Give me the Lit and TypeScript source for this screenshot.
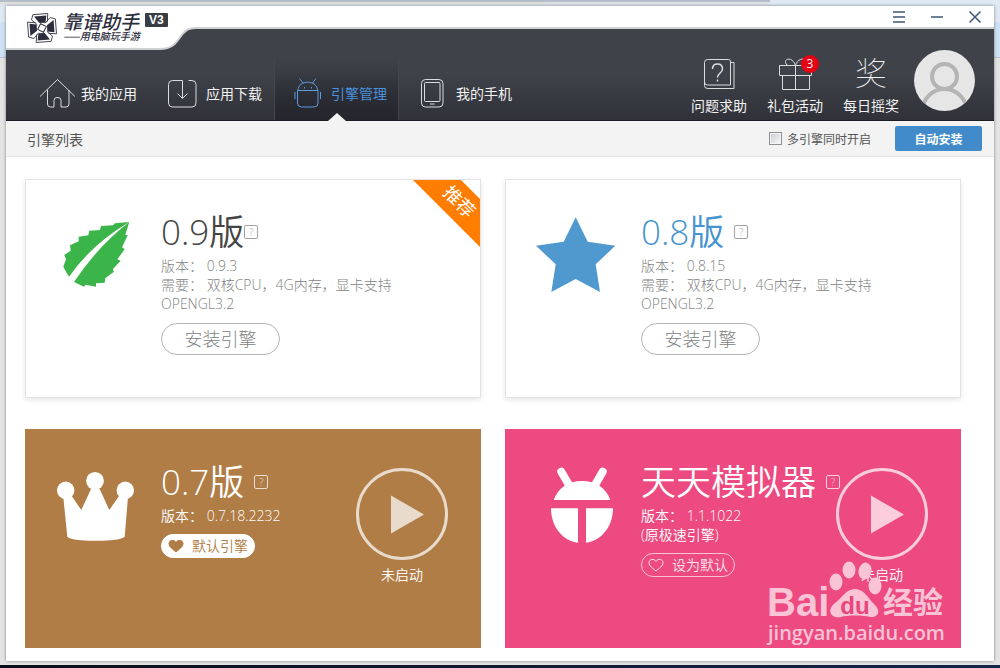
import { LitElement, html, css, svg, nothing } from "lit";
import { customElement, property } from "lit/decorators.js";
import { classMap } from "lit/directives/class-map.js";

type Engine = {
  theme: string;
  icon: string;
  title: string;
  lines: string[];
  installed: boolean;
  isDefault?: boolean;
  recommended?: boolean;
  tight?: boolean;
};

const engines: Engine[] = [
  {
    theme: "dark",
    icon: "leaf",
    title: "0.9版",
    lines: ["版本： 0.9.3", "需要： 双核CPU，4G内存，显卡支持 OPENGL3.2"],
    installed: false,
    recommended: true,
    tight: true,
  },
  {
    theme: "blue",
    icon: "star",
    title: "0.8版",
    lines: ["版本： 0.8.15", "需要： 双核CPU，4G内存，显卡支持 OPENGL3.2"],
    installed: false,
  },
  {
    theme: "brown",
    icon: "crown",
    title: "0.7版",
    lines: ["版本： 0.7.18.2232"],
    installed: true,
    isDefault: true,
  },
  {
    theme: "pink",
    icon: "robot",
    title: "天天模拟器",
    lines: ["版本： 1.1.1022", "(原极速引擎)"],
    installed: true,
  },
];

const emblems: Record<string, unknown> = {
  leaf: svg`<g fill="#3bb54a">
    <path d="M73.3 8 59 9.3 57 11.3 45 12 44 16 33.3 16.7 32.3 21.3 22.7 22.7 22.7 27.3 14 31.3 14.7 36.7 8.3 41 10 45.3 7.3 52.7 9 56 13 62.7Q36 30 73.3 8Z"/>
    <path d="M73.3 8Q42 32 18 68L28 72.7 29.7 70.7 40 72.7 40 69.3 48.7 68.7 49.3 64.3 58 57.7 56.7 55.3 64.7 46.7 61.3 45.3 68.7 35.3 66 33.3 71.7 21.3 69.3 20.7Z"/></g>`,
  star: svg`<path fill="#4f99cf" d="M39.7 3.3 51.7 27.7 79.3 31.7 59.7 50.3 64 78 39.7 65 15.3 78 19.7 50.3 0 31.7 27.7 27.7Z"/>`,
  crown: svg`<g fill="#fff"><circle cx="9.7" cy="26.3" r="8.7"/><circle cx="39" cy="16.9" r="8.9"/><circle cx="69.3" cy="26.3" r="8.7"/>
    <path d="M7.3 33 15.7 32 25.3 46 35 25H43.7L53.3 46 63 32 72 33 68.7 72.7Q64 76.7 39.7 76.7T11.3 72.7Z"/></g>`,
  robot: svg`<g fill="#fff"><path d="M17.7 36C22 24 32 17 46 17S70 24 74.3 36Z"/>
    <path d="M15 44.3H42V78.7C27 77 15 63 15 44.3ZM77 44.3H50V78.7C65 77 77 63 77 44.3Z"/>
    <path d="M25.3 7.7 33 21M66.7 7.7 59 21" stroke="#fff" stroke-width="8" stroke-linecap="round"/></g>`,
};

const family = css`
  :host {
    font-family: "Open Sans", "Noto Sans CJK SC", sans-serif;
    font-size: 14px;
  }
  * {
    box-sizing: border-box;
  }
  button {
    font: inherit;
    color: inherit;
    background: none;
    border: 0;
    padding: 0;
    margin: 0;
    white-space: nowrap;
    cursor: pointer;
  }
  svg {
    display: block;
    flex: none;
    overflow: visible;
  }
`;

@customElement("engine-card")
export class EngineCard extends LitElement {
  @property({ attribute: false }) engine!: Engine;

  static styles = [
    family,
    css`
      :host {
        display: block;
        min-width: 0;
      }
      .card {
        position: relative;
        display: flex;
        height: 100%;
        min-height: 219px;
        padding: 29px 32px 20px 30px;
        border: 1px solid #e3e3e3;
        background: #fff;
        color: #828282;
        box-shadow: 0 2px 5px rgba(0, 0, 0, 0.1);
        font-weight: 300;
      }
      .brown,
      .pink {
        color: #fff;
        box-shadow: none;
      }
      .brown p,
      .pink p,
      .brown button,
      .pink button {
        font-weight: 350;
      }
      .brown {
        background: #b07d46;
        border-color: #b07d46;
      }
      .pink {
        background: #ec4a80;
        border-color: #ec4a80;
      }
      .emblem {
        width: 80px;
        height: 80px;
        margin: 5px 25px 0 0;
      }
      .info {
        flex: 1;
        min-width: 0;
      }
      .head {
        display: flex;
        align-items: center;
        gap: 10px;
        margin-bottom: 1px;
      }
      .tight .head {
        gap: 0;
      }
      h2 {
        margin: 0;
        font-size: 35px;
        line-height: 46px;
        font-weight: 350;
        white-space: nowrap;
      }
      .dark h2 {
        color: #444;
      }
      .blue h2 {
        color: #4694cf;
      }
      .help {
        flex: none;
        width: 14px;
        height: 14px;
        border: 1px solid currentColor;
        border-radius: 2px;
        font-size: 10px;
        line-height: 12px;
        opacity: 0.75;
      }
      p {
        margin: 0;
        max-width: 240px;
        line-height: 19px;
      }
      .install {
        width: 119px;
        height: 32px;
        margin-top: 10px;
        border: 1px solid #b5b5b5;
        border-radius: 16px;
        font-size: 18px;
        line-height: 28px;
      }
      .pill {
        display: flex;
        align-items: center;
        justify-content: center;
        gap: 8px;
        width: 94px;
        height: 24px;
        margin-top: 9px;
        border: 1px solid #f9c3d6;
        border-radius: 12px;
        line-height: 20px;
        color: #fde3ec;
      }
      .pill.on {
        background: #fff;
        border-color: #fff;
        color: #b07d46;
      }
      .run {
        flex: none;
        display: flex;
        flex-direction: column;
        align-items: center;
        gap: 5px;
        align-self: flex-start;
        padding-top: 9px;
        line-height: 20px;
      }
      .ribbon {
        position: absolute;
        top: 0;
        right: 0;
      }
      .ribbon text {
        font-size: 18px;
        font-weight: 400;
        fill: #fff;
      }
    `,
  ];

  render() {
    const e = this.engine;
    return html`
      <article class=${classMap({ card: true, [e.theme]: true, tight: !!e.tight })}>
        <svg class="emblem" viewBox="0 0 80 80" aria-hidden="true">${emblems[e.icon]}</svg>
        <div class="info">
          <div class="head">
            <h2>${e.title}</h2>
            <button class="help" aria-label="帮助">?</button>
          </div>
          ${e.lines.map((line) => html`<p>${line}</p>`)}
          ${e.installed
            ? html`<button class=${classMap({ pill: true, on: !!e.isDefault })}>
                <svg width="16" height="14" viewBox="0 0 16 14" aria-hidden="true">
                  <path
                    d="M8 13C5 10.500 1 8 1 4.600 1 1 6 0 8 3.500 10 0 15 1 15 4.600 15 8 11 10.500 8 13Z"
                    fill=${e.isDefault ? "currentColor" : "none"}
                    stroke="currentColor"
                  />
                </svg>
                ${e.isDefault ? "默认引擎" : "设为默认"}
              </button>`
            : html`<button class="install">安装引擎</button>`}
        </div>
        ${e.installed
          ? html`<button class="run">
              <svg width="92" height="92" viewBox="0 0 92 92" aria-hidden="true">
                <circle cx="46" cy="46" r="44.500" fill="none" stroke="#fff" stroke-opacity=".72" stroke-width="3" />
                <path d="M35 27.500 68 46.500 35 65.500Z" fill="#fff" fill-opacity=".72" />
              </svg>
              未启动
            </button>`
          : nothing}
        ${e.recommended
          ? html`<svg class="ribbon" width="67" height="67" viewBox="0 0 67 67">
              <path d="M0 0H48L67 19V67Z" fill="#ff7d00" />
              <text x="46" y="28" text-anchor="middle" transform="rotate(45 46 22)">推荐</text>
            </svg>`
          : nothing}
      </article>
    `;
  }
}

const tabs = [
  {
    label: "我的应用",
    icon: svg`<path d="M1 18.500 18.500 1.500 36 18.500M8.500 12V26q0 3 3 3H15V22.500q0-3 3-3h1q3 0 3 3V29H27q3 0 3-3V12"/>`,
  },
  {
    label: "应用下载",
    icon: svg`<path d="M18.500 20V2.500H8.500q-4 0-4 4V25q0 4 4 4H28q4 0 4-4V6.500q0-4-4-4H24.500M13.500 15.500l5 5 5-5"/>`,
  },
  {
    label: "引擎管理",
    active: true,
    icon: svg`<path d="M8.500 12.500H29V25q0 4-4 4H12.500q-4 0-4-4ZM9 12.500C9 1.500 28.500 1.500 28.500 12.500M10.500.500 14 5M27 .500 23.500 5M15.500 9v1.500M22.500 9v1.500M6 14v7M31.500 14v7"/>`,
  },
  {
    label: "我的手机",
    icon: svg`<rect x="7.500" y="1.500" width="21.500" height="27.500" rx="4"/><rect x="10.500" y="4.500" width="15.500" height="19" rx="1"/><path d="M16 26h4.500"/>`,
  },
];

@customElement("app-root")
export class AppRoot extends LitElement {
  static styles = [
    family,
    css`
      :host {
        display: flex;
        flex-direction: column;
        min-height: 100vh;
        color: #555;
        background:
          linear-gradient(#b4bdc8 0 2px, #dfe1e2 2px 5px, transparent 5px) 0 0 / 55% 5px no-repeat,
          linear-gradient(#b4bdc8 0 2px, #e0e4e8 2px 5px, transparent 5px) 0 0 / 77% 5px no-repeat,
          linear-gradient(#dfe9f4 0 22px, #cfe1f4 22px 57px, #b5c3d2 57px 58px, #e4e4e5 58px);
      }
      .window {
        flex: 1;
        position: relative;
        display: flex;
        flex-direction: column;
        margin: 6px 6px 4px;
        background: #fff;
        box-shadow: 0 0 3px rgba(0, 0, 0, 0.45);
      }
      .taskbar {
        height: 3px;
        background: linear-gradient(90deg, #0b0d18, #14254a);
      }
      header {
        background: linear-gradient(#3f4249 0 60%, #303139);
        border-bottom: 1px solid #1c1d24;
      }
      .titlebar {
        display: flex;
        justify-content: space-between;
        align-items: flex-start;
        height: 23px;
        background: #fff;
        border-bottom: 2px solid #cfd1d2;
      }
      .brand {
        position: relative;
        display: flex;
        gap: 5px;
        padding: 6px 0 0 20px;
        height: 44px;
        color: #2d2e3d;
      }
      .swoop {
        position: absolute;
        left: 0;
        top: 0;
      }
      .brand > :not(.swoop) {
        position: relative;
      }
      .name {
        display: flex;
        flex-direction: column;
        font-style: italic;
        font-family: "Noto Sans CJK SC", sans-serif;
      }
      .name strong {
        font-size: 19px;
        font-weight: 500;
        line-height: 18px;
      }
      .name span {
        font-size: 10px;
        font-weight: 500;
        line-height: 12px;
      }
      .version {
        align-self: flex-start;
        width: 23px;
        margin-top: 1px;
        border-radius: 1px;
        background: #3a3d44;
        color: #fff;
        font: 700 12px/14px "Liberation Sans", sans-serif;
        text-align: center;
      }
      .controls {
        display: flex;
      }
      .controls button {
        display: grid;
        place-items: center;
        width: 38px;
        height: 21px;
      }
      .controls svg {
        stroke: #3c5878;
        stroke-width: 1.5;
      }
      .bar {
        display: flex;
        justify-content: space-between;
        align-items: flex-end;
        padding: 0 19px;
        color: #f2f2f2;
      }
      nav {
        display: flex;
        gap: 2px;
      }
      .tab {
        position: relative;
        display: flex;
        align-items: center;
        gap: 6px;
        width: 123px;
        height: 60px;
        padding: 6px 0 0 14px;
        color: inherit;
        text-decoration: none;
        white-space: nowrap;
      }
      .tab svg,
      .line-icon {
        fill: none;
        stroke: #dcdcdc;
      }
      .tab.active {
        color: #4a90dc;
        background: linear-gradient(rgba(30, 31, 38, 0), #24252d);
        box-shadow: 1px 0 #45464e, -1px 0 #45464e;
      }
      .tab.active svg {
        stroke: #5b9ce0;
      }
      .tab.active::after {
        content: "";
        position: absolute;
        left: 50%;
        bottom: -1px;
        margin-left: -9px;
        border: 9px solid transparent;
        border-top: 0;
        border-bottom: 8px solid #f3f3f3;
      }
      .actions {
        display: flex;
        align-items: flex-end;
        gap: 20px;
        padding-top: 21px;
      }
      .action {
        position: relative;
        display: flex;
        flex-direction: column;
        align-items: center;
        gap: 6px;
        padding-bottom: 4px;
        line-height: 20px;
      }
      .glyph {
        height: 32px;
        font-size: 32px;
        line-height: 30px;
        font-weight: 100;
      }
      .badge {
        position: absolute;
        left: 34px;
        top: -3px;
        width: 18px;
        height: 18px;
        border-radius: 9px;
        background: #e60012;
        font-size: 12px;
        line-height: 18px;
        text-align: center;
      }
      .avatar {
        margin: 0 0 9px -5px;
      }
      .toolbar {
        display: flex;
        align-items: center;
        justify-content: space-between;
        height: 36px;
        padding: 0 12px 0 21px;
        background: #f3f3f3;
        border-bottom: 1px solid #e2e2e2;
      }
      h1 {
        margin: 0;
        font-size: 14px;
        font-weight: 400;
      }
      .tools,
      label {
        display: flex;
        align-items: center;
      }
      .tools {
        gap: 24px;
      }
      label {
        gap: 5px;
        font-size: 12px;
      }
      input {
        appearance: none;
        width: 13px;
        height: 13px;
        margin: 0;
        border: 1px solid #8e8f8f;
        background: linear-gradient(135deg, #c9ccd2, #fafafa);
        box-shadow: inset 0 0 0 1px #f4f4f4;
      }
      .auto {
        width: 87px;
        height: 25px;
        border-radius: 2px;
        background: #428bca;
        color: #fff;
        font-size: 12px;
        font-weight: 700;
      }
      main {
        flex: 1;
        display: grid;
        grid-template-columns: repeat(auto-fit, minmax(400px, 1fr));
        align-content: start;
        gap: 31px 24px;
        padding: 22px 33px 13px 19px;
      }
      .watermark {
        position: absolute;
        right: 46px;
        bottom: 11px;
        pointer-events: none;
      }
      .big {
        font-weight: 700;
      }
      .latin {
        font-family: "Liberation Sans", sans-serif;
      }
      .site {
        font-weight: 600;
      }
    `,
  ];

  private blades = [0, 90, 180, 270].map(
    (a) => svg`<g transform="rotate(${a} 16 16)">
      <path d="M12 2.500 24 5.500 21 12 15 10.500Z" fill="#2d2e3d"/>
      <path d="M11.500.500 8.500 5 12.500 11.500M11.500.500 26 4 23 11.500" fill="none" stroke="#2d2e3d" stroke-width=".8"/>
    </g>`
  );

  render() {
    return html`
      <div class="window">
        <header>
          <div class="titlebar">
            <div class="brand">
              <svg class="swoop" width="200" height="44" viewBox="0 0 200 44" aria-hidden="true">
                <path d="M0 0H200V22H190C170 22 177 43 154 43H0Z" fill="#fff" />
                <path d="M200 22H190C170 22 177 43 154 43H0" fill="none" stroke="#cfd1d2" stroke-width="2" />
              </svg>
              <svg width="32" height="32" viewBox="0 0 32 32" aria-hidden="true">
                <g transform="rotate(-18 16 16)">
                  ${this.blades}
                  <path d="M16 11.500 20.500 16 16 20.500 11.500 16Z" fill="#fff" stroke="#2d2e3d" />
                </g>
              </svg>
              <div class="name"><strong>靠谱助手</strong><span>——用电脑玩手游</span></div>
              <span class="version">V3</span>
            </div>
            <div class="controls">
              <button aria-label="菜单">
                <svg width="12" height="12"><path d="M0 1h12M0 6h12M0 11h12" /></svg>
              </button>
              <button aria-label="最小化">
                <svg width="12" height="12"><path d="M0 6h12" /></svg>
              </button>
              <button aria-label="关闭">
                <svg width="12" height="12"><path d="M.500.500l11 11M11.500.500l-11 11" /></svg>
              </button>
            </div>
          </div>
          <div class="bar">
            <nav>
              ${tabs.map(
                (t) => html`<a href="#" class=${classMap({ tab: true, active: !!t.active })}>
                  <svg width="36" height="30" viewBox="0 0 36 30" aria-hidden="true">${t.icon}</svg>
                  ${t.label}
                </a>`
              )}
            </nav>
            <div class="actions">
              <button class="action">
                <svg class="line-icon" width="32" height="32" viewBox="0 0 32 32" aria-hidden="true">
                  <path d="M4.500 1.500H25.500q2 0 2 2V27H4.500q-3 0-3-3V4.500q0-3 3-3ZM1.500 24V27.500q0 3 3 3H31V4.500H27.500" />
                  <path d="M9.500 11q0-5 5-5t5 5c0 4-5 4-5 8.500M14.500 21.500v2" stroke-width="1.500" />
                </svg>
                问题求助
              </button>
              <button class="action">
                <svg class="line-icon" width="32" height="32" viewBox="0 0 32 32" aria-hidden="true">
                  <path
                    d="M.500 7.500H32.500V17.500H.500ZM3.500 17.500H30.500V31.500H3.500ZM16.500 7.500V31.500M16.500 7.500C14-1 5.500 0 6.500 4.500 7 7 9 7.500 9 7.500M16.500 7.500C19-1 27.500 0 26.500 4.500 26 7 24 7.500 24 7.500"
                  />
                </svg>
                礼包活动
                <span class="badge">3</span>
              </button>
              <button class="action">
                <span class="glyph">奖</span>
                每日摇奖
              </button>
              <button class="avatar" aria-label="用户">
                <svg width="61" height="61" viewBox="0 0 61 61">
                  <defs><clipPath id="disc"><circle cx="30.500" cy="30.500" r="30.500" /></clipPath></defs>
                  <g clip-path="url(#disc)">
                    <path d="M0 0H61V61H0Z" fill="#e6e6e6" />
                    <g fill="none" stroke="#b4b4b4" stroke-width="4">
                      <circle cx="30.500" cy="61" r="22" />
                      <circle cx="30.500" cy="26.500" r="12.500" fill="#e6e6e6" />
                    </g>
                  </g>
                </svg>
              </button>
            </div>
          </div>
        </header>
        <div class="toolbar">
          <h1>引擎列表</h1>
          <div class="tools">
            <label for="multi"><input id="multi" type="checkbox" />多引擎同时开启</label>
            <button class="auto">自动安装</button>
          </div>
        </div>
        <main>${engines.map((e) => html`<engine-card .engine=${e}></engine-card>`)}</main>
        <svg class="watermark" width="182" height="90" viewBox="0 0 182 90" fill="#fac3d6">
          <text class="big latin" x="1" y="56" font-size="40">Bai</text>
          <path d="M89 29C98 29 102 38 107 43 117 52 111 58 104 57 98 55 81 55 75 57 65 59 60 50 69 43 76 38 80 29 89 29Z" />
          <ellipse cx="70" cy="22" rx="6.500" ry="8.500" />
          <ellipse cx="83" cy="10" rx="6.500" ry="8.500" />
          <ellipse cx="99" cy="11" rx="6.500" ry="8.500" transform="rotate(12 99 11)" />
          <ellipse cx="109" cy="26" rx="6.500" ry="8.500" />
          <text class="big latin" x="89" y="54" font-size="24" text-anchor="middle" fill="#e8457c">du</text>
          <text class="big" x="117" y="53" font-size="30">经验</text>
          <text class="site" x="2" y="80" font-size="20">jingyan.baidu.com</text>
        </svg>
      </div>
      <div class="taskbar"></div>
    `;
  }
}
